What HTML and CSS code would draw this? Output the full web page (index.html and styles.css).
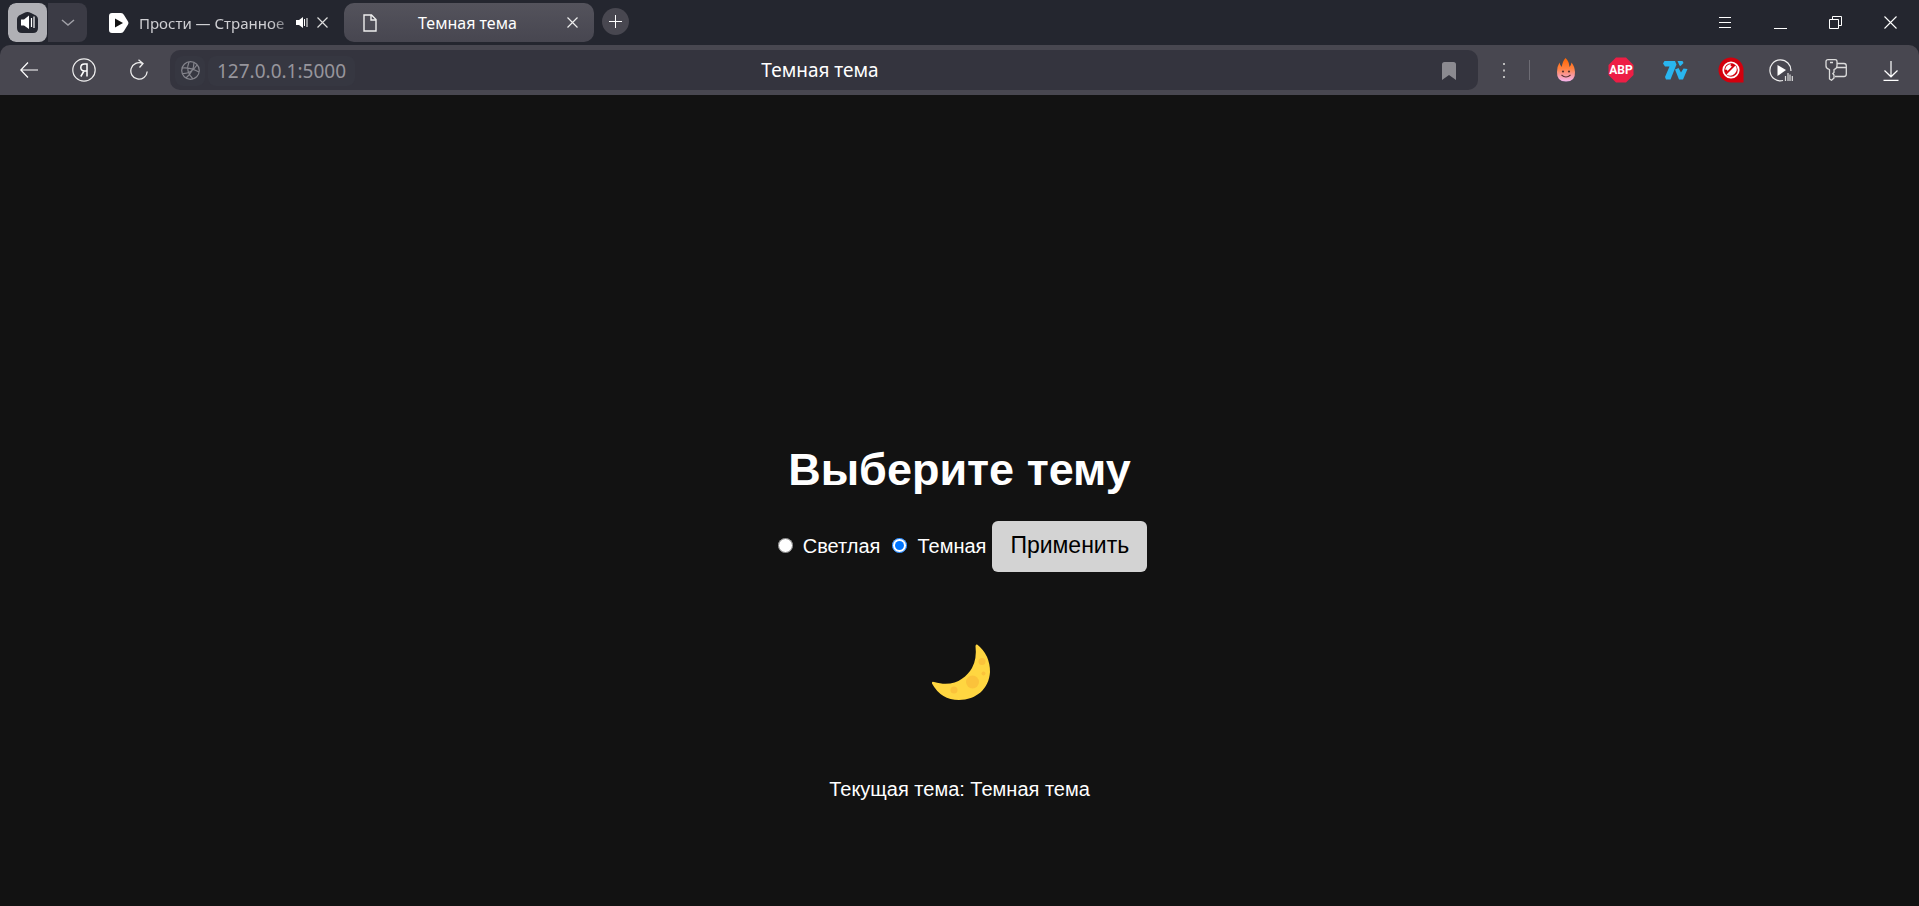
FILE: index.html
```html
<!DOCTYPE html>
<html lang="ru">
<head>
<meta charset="utf-8">
<meta name="viewport" content="width=device-width, initial-scale=1">
<title>Темная тема</title>
<link rel="stylesheet" href="styles.css">
</head>
<body>
<header class="browser">
  <div class="tabstrip">
    <div class="group">
      <button class="group-main" type="button" aria-label="Группа вкладок">
        <svg width="23" height="23" viewBox="0 0 23 23"><path d="M8 2Q11.500 0 15 2L20 4.500Q22 6 22 8V17Q22 22 17 22H6Q1 22 1 17V8Q1 6 3 4.500Z" fill="#24262f"/><path d="M5 8.500H8L13 4.500V18L8 14.500H5Z" fill="#fff"/><path d="M15.500 7V16M18 5.500V17" stroke="#fff" stroke-width="1.200"/></svg>
      </button>
      <button class="group-more" type="button" aria-label="Список вкладок">
        <svg width="14" height="8" viewBox="0 0 14 8"><path d="M1 1L7 6L13 1" fill="none" stroke="#a0a0a7" stroke-width="1.500"/></svg>
      </button>
    </div>
    <div class="tab">
      <svg width="20" height="20" viewBox="0 0 20 20"><path d="M3 0H12Q14 0 15 2L19 8.500Q20 10 19 11.500L15 18Q14 20 12 20H3Q0 20 0 17V3Q0 0 3 0Z" fill="#fff"/><path d="M6 5.500L14 10L6 14.500Z" fill="#111"/></svg>
      <span class="tab-name fade">Прости — Странное</span>
      <svg width="12" height="11" viewBox="0 0 12 11"><path d="M0 3H3L7 0V11L3 8H0Z" fill="#fff"/><path d="M8.500 2V9M11 1V10" stroke="#fff"/></svg>
      <button class="plain" type="button" aria-label="Закрыть вкладку"><svg width="11" height="11" viewBox="0 0 11 11"><path d="M.5 .5L10.500 10.500M10.500 .5L.5 10.500" stroke="#ddd" stroke-width="1.200"/></svg></button>
    </div>
    <div class="tab active">
      <svg width="14" height="18" viewBox="0 0 14 18"><path d="M1 1H8.500L13 5.500V17H1ZM8 1V6H13" fill="none" stroke="#eee" stroke-width="1.400"/></svg>
      <span class="tab-name">Темная тема</span>
      <button class="plain" type="button" aria-label="Закрыть вкладку"><svg width="11" height="11" viewBox="0 0 11 11"><path d="M.5 .5L10.500 10.500M10.500 .5L.5 10.500" stroke="#eee" stroke-width="1.200"/></svg></button>
    </div>
    <button class="new-tab" type="button" aria-label="Новая вкладка"><svg width="13" height="13" viewBox="0 0 13 13"><path d="M0 6.500H13M6.500 0V13" stroke="#fff"/></svg></button>
    <div class="window-buttons">
      <button class="cell" type="button" aria-label="Меню"><svg width="13" height="13" viewBox="0 0 13 13"><path d="M0 1.500H12M0 6.500H12M0 11.500H12" stroke="#fff"/></svg></button>
      <button class="cell" type="button" aria-label="Свернуть"><svg width="13" height="13" viewBox="0 0 13 13"><path d="M0 12.500H13" stroke="#fff"/></svg></button>
      <button class="cell" type="button" aria-label="Восстановить"><svg width="13" height="13" viewBox="0 0 13 13"><path d="M.5 3.500H9.500V12.500H.5ZM3.500 3.500V.5H12.500V9.500H9.500" fill="none" stroke="#fff"/></svg></button>
      <button class="cell" type="button" aria-label="Закрыть"><svg width="13" height="13" viewBox="0 0 13 13"><path d="M.5 .5L12.500 12.500M12.500 .5L.5 12.500" stroke="#fff" stroke-width="1.100"/></svg></button>
    </div>
  </div>
  <div class="toolbar">
    <button class="cell" type="button" aria-label="Назад"><svg width="18" height="16" viewBox="0 0 18 16"><path d="M8 .5L.8 8L8 15.500M1 8H18" fill="none" stroke="#fff" stroke-width="1.200"/></svg></button>
    <button class="cell" type="button" aria-label="Яндекс"><svg width="24" height="24" viewBox="0 0 24 24"><circle cx="12" cy="12" r="11.200" fill="none" stroke="#eee" stroke-width="1.200"/><path d="M15 18.500V6H12.500Q8.800 6 8.800 9.600Q8.800 13 12.500 13H15M12 13L8.800 18.500" fill="none" stroke="#fff" stroke-width="1.500"/></svg></button>
    <button class="cell" type="button" aria-label="Обновить"><svg width="18" height="22" viewBox="0 0 18 22"><path d="M17.200 12.500A8.200 8.200 0 1 1 12.500 4.500M8.500 .8L13 4.500L9.500 8.500" fill="none" stroke="#eee" stroke-width="1.300"/></svg></button>
    <div class="address">
      <button class="site" type="button" aria-label="О сайте"><svg width="19" height="19" viewBox="0 0 19 19"><g fill="none" stroke="#85858d" stroke-width="1.200"><circle cx="9.500" cy="9.500" r="8.800"/><path d="M8 1Q4 10 12 18M13 1.500Q13 10 5 17M1 7Q9 6 18 11M1.500 12.500Q10 13 16 4"/></g></svg></button>
      <a class="url" href="#theme">127.0.0.1:5000</a>
      <span class="page-title">Темная тема</span>
      <button class="bookmark" type="button" aria-label="В закладки"><svg width="14" height="18" viewBox="0 0 14 18"><path d="M2.500 0H11.500Q14 0 14 2.500V18L7 13L0 18V2.500Q0 0 2.500 0Z" fill="#8b8a90"/></svg></button>
    </div>
    <button class="dots" type="button" aria-label="Ещё"><svg width="2" height="15" viewBox="0 0 2 15"><path d="M0 0H2V2H0ZM0 6.500H2V8.500H0ZM0 13H2V15H0Z" fill="#bbb"/></svg></button>
    <div class="extensions">
      <button class="cell" type="button" aria-label="Огонёк"><svg width="20" height="24" viewBox="0 0 20 24"><defs><linearGradient id="flame" x1="0" y1="0" x2="0" y2="1"><stop offset="0" stop-color="#ff6500"/><stop offset=".45" stop-color="#ff8140"/><stop offset=".75" stop-color="#f99ba5"/><stop offset="1" stop-color="#f6b5ee"/></linearGradient></defs><path d="M9.500 0Q13 3 13.500 9Q15 8 15.500 4.500Q18.500 8 19 14Q19.500 23.500 10 23.500Q.5 23.500 1 14Q1.200 8 3.500 4.500Q4 8 6 9Q6 4 9.500 0Z" fill="url(#flame)"/><circle cx="7" cy="13.500" r="1.100" fill="#5a3330"/><circle cx="13" cy="13.500" r="1.100" fill="#5a3330"/><path d="M5.500 17Q10 21 14.500 17" fill="none" stroke="#5a3330" stroke-width="1.100"/></svg></button>
      <button class="cell" type="button" aria-label="ABP"><svg width="26" height="26" viewBox="0 0 26 26"><path d="M8 .5H18L25.500 8V18L18 25.500H8L.5 18V8Z" fill="#ed1e45"/><text class="abp" x="13" y="17" text-anchor="middle">ABP</text></svg></button>
      <button class="cell" type="button" aria-label="7TV"><svg width="25" height="19" viewBox="0 0 25 19"><path d="M1.500 0H12L13.500 3.500L7.500 18.500H3L2 16L6.500 5.500H2L0 2.500ZM14.500 0H19.500L20.500 2L17.500 5L16.500 4.500ZM12 8.500L15.500 7L18 11.500L20.500 7.500L24.500 8L20 18.500H16Z" fill="#29b6f0"/></svg></button>
      <button class="cell" type="button" aria-label="Блокировщик"><svg width="26" height="26" viewBox="0 0 26 26"><path d="M13 .5A12.500 12.500 0 0 0 13 25.500H25.500V13A12.500 12.500 0 0 0 13 .5Z" fill="#d3000d"/><circle cx="13" cy="13" r="7.700" fill="none" stroke="#fff" stroke-width="1.800"/><path d="M8.500 17.500L17.500 8.500A6.500 6.500 0 0 1 8.500 17.500Z" fill="#fff"/><path d="M7 14Q7 8 13 7L15 8.500L8 15.500Z" fill="#fff"/><circle cx="14" cy="8" r="1.500" fill="#d3000d"/><circle cx="8" cy="14" r="1.500" fill="#d3000d"/></svg></button>
      <div class="tools">
        <button class="cell" type="button" aria-label="Музыка"><svg width="24" height="23" viewBox="0 0 24 23"><path d="M14 21.500A10.500 10.500 0 1 1 21.900 12" fill="none" stroke="#eee" stroke-width="1.200"/><path d="M8.500 6L17 11L8.500 17Z" fill="#fff"/><path d="M16.500 17V22M19 14V22M21 15.500V22M23.300 17V22" stroke="#ddd" stroke-width="1.200"/></svg></button>
        <button class="cell" type="button" aria-label="Пароли"><svg width="22" height="22" viewBox="0 0 22 22"><g fill="none" stroke="#ddd" stroke-width="1.300" stroke-linejoin="round"><path d="M1 2.500Q1 .7 3 .7H10Q12 .7 12 2.500V7Q12 9.500 9 10.500V13.500L7.800 14.500L9 16V19L6.500 21.300L4.500 20V10.500Q1 9.500 1 7ZM5 3.500H8"/><path d="M12 4.500H19Q21.300 4.500 21.300 7V15Q21.300 17.500 19 17.500H10M12 8.500H21"/></g></svg></button>
        <button class="cell" type="button" aria-label="Загрузки"><svg width="16" height="21" viewBox="0 0 16 21"><path d="M8 1V16.500M1.500 10.500L8 16.800L14.500 10.500M.5 20.300H15.500" fill="none" stroke="#fff" stroke-width="1.200"/></svg></button>
      </div>
    </div>
  </div>
</header>
<main class="page" id="theme">
  <h1 class="heading">Выберите тему</h1>
  <form class="choices">
    <span class="choice"><input class="radio" type="radio" name="theme" id="light"><label for="light">Светлая</label></span>
    <span class="choice"><input class="radio" type="radio" name="theme" id="dark" checked><label for="dark">Темная</label></span>
    <button class="apply" type="button">Применить</button>
  </form>
  <svg class="moon" width="60" height="58" viewBox="-1 0 60 58" role="img" aria-label="Луна"><path d="M46.500 .8Q59 11 59 28C58 45 45 56 28 56Q10 56 1 39.500Q.5 37 3 38C23 44 35 34 41 24Q46 15 44.500 2Q45 0 46.500 .8Z" fill="#ffd641"/><g fill="#fbc23b"><circle cx="41.500" cy="38" r="6.500"/><circle cx="51" cy="17.500" r="3.500"/><circle cx="52.500" cy="29.500" r="2"/><circle cx="23" cy="46" r="3.500"/></g></svg>
  <p class="current">Текущая тема: Темная тема</p>
</main>
</body>
</html>
```
FILE: styles.css
```css
* {
  box-sizing: border-box;
}

body {
  margin: 0;
  min-height: 100vh;
  background: #121212;
  color: #fff;
  font-family: "Liberation Sans", Arial, sans-serif;
  font-size: 20px;
}

button {
  padding: 0;
  border: 0;
  background: none;
  color: inherit;
  font-family: inherit;
}

svg {
  display: block;
  flex: none;
}

.browser {
  background: #24262f;
  font-family: "Noto Sans", sans-serif;
}

.tabstrip {
  display: flex;
  height: 45px;
  padding: 3px 1px 3px 8px;
}

.group {
  display: flex;
  gap: 1px;
  overflow: hidden;
  border-radius: 8px;
}

.group button {
  display: grid;
  place-items: center;
  width: 39px;
}

.group-main {
  border-radius: 8px;
  background: #b0b0b5;
}

.group-more {
  background: #3b3b45;
}

.tab {
  display: flex;
  align-items: center;
  width: 250px;
  margin-left: 3px;
  padding: 0 12px 0 19px;
  border-radius: 10px;
  color: #cfcfd3;
  font-size: 16px;
}

.tab-name {
  flex: 1;
  text-align: center;
  white-space: nowrap;
}

.fade {
  margin: 0 6px 0 10px;
  font-size: 15px;
  text-align: left;
  mask-image: linear-gradient(to right, #000 88%, rgba(0, 0, 0, 0.3));
}

.plain {
  margin-left: 9px;
}

.active {
  margin-left: 4px;
  padding-right: 16px;
  background: linear-gradient(#54535c, #474650);
  color: #fff;
}

.new-tab {
  display: grid;
  place-items: center;
  width: 27px;
  height: 27px;
  margin: 5px 0 0 8px;
  border-radius: 50%;
  background: #484750;
}

.window-buttons {
  display: flex;
  margin-left: auto;
}

.cell {
  display: grid;
  place-items: center;
  width: 55px;
}

.toolbar {
  display: flex;
  height: 50px;
  padding: 5px 1px;
  border-radius: 10px 10px 0 0;
  background: #484750;
}

.address {
  display: grid;
  flex: 1;
  grid-template-columns: 30px 150px 1fr 150px 38px;
  align-items: center;
  margin-left: 4px;
  padding: 5px;
  border-radius: 10px;
  background: #34343e;
}

.site {
  display: grid;
  place-items: center;
  height: 30px;
  border-radius: 8px;
  background: #363741;
}

.url {
  height: 30px;
  margin-left: 3px;
  padding-left: 9px;
  border-radius: 8px;
  background: #363741;
  color: #96959c;
  font-size: 19px;
  line-height: 31px;
  text-decoration: none;
}

.page-title {
  font-size: 19px;
  line-height: 31px;
  text-align: center;
}

.bookmark {
  display: grid;
  grid-column: 5;
  justify-items: start;
  padding-left: 7px;
}

.dots {
  display: grid;
  place-items: center;
  width: 51px;
}

.extensions {
  display: flex;
  padding-left: 9px;
  background: linear-gradient(#6d6c74, #6d6c74) left center / 1px 20px no-repeat;
}

.tools {
  display: flex;
  margin-left: -5px;
}

.abp {
  fill: #fff;
  font: bold 12px Roboto, sans-serif;
}

.page {
  display: flex;
  flex-direction: column;
  align-items: center;
  padding: 349px 20px 20px;
}

.heading {
  margin: 0 0 26px;
  font-size: 45px;
  line-height: 51px;
}

.choices {
  display: flex;
  align-items: center;
  gap: 6px;
}

.choice {
  display: flex;
  align-items: center;
}

.radio {
  width: 15px;
  height: 15px;
  margin: 0 10px 3px 6px;
}

.apply {
  padding: 11px 18px 13px;
  border-radius: 6px;
  background: #d3d3d3;
  color: #000;
  font-size: 23px;
  line-height: 27px;
}

.moon {
  margin: 72px 0 76px;
}

.current {
  margin: 0;
  line-height: 23px;
}
```
